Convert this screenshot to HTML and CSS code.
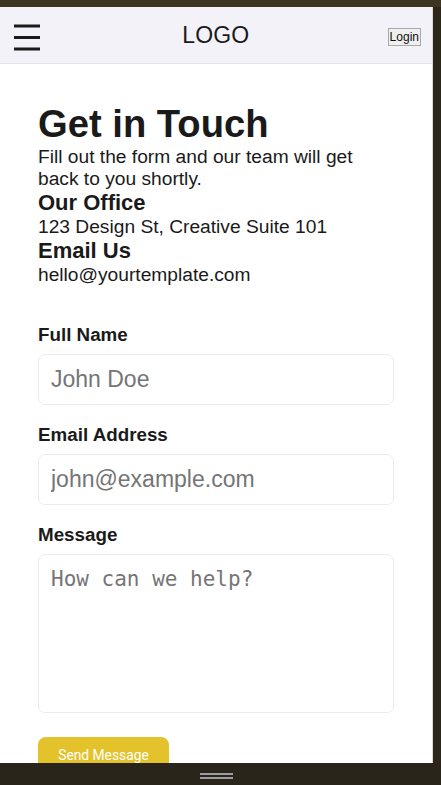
FILE: index.html
```html
<!DOCTYPE html>
<html lang="en">
<head>
<meta charset="utf-8">
<title>Contact</title>
<link rel="stylesheet" href="styles.css">
</head>
<body>
<div class="topbar"></div>
<div class="device-row">
  <div class="screen">
    <header class="site-header">
      <button class="menu-btn" aria-label="Menu">
        <svg width="30" height="30" viewBox="0 0 30 30">
          <rect x="2" y="3.5" width="26" height="3" fill="#1a1a1a"/>
          <rect x="2" y="15" width="26" height="3" fill="#1a1a1a"/>
          <rect x="2" y="26.5" width="26" height="3" fill="#1a1a1a"/>
        </svg>
      </button>
      <div class="logo">LOGO</div>
      <button class="login-btn">Login</button>
    </header>
    <main class="content">
      <section class="info">
        <h1 class="title">Get in Touch</h1>
        <p class="lead">Fill out the form and our team will get back to you shortly.</p>
        <h2 class="info-head">Our Office</h2>
        <p class="info-text">123 Design St, Creative Suite 101</p>
        <h2 class="info-head">Email Us</h2>
        <p class="info-text">hello@yourtemplate.com</p>
      </section>
      <form class="contact-form">
        <div class="field">
          <label class="field-label" for="name">Full Name</label>
          <input class="field-input" id="name" type="text" placeholder="John Doe">
        </div>
        <div class="field">
          <label class="field-label" for="email">Email Address</label>
          <input class="field-input" id="email" type="email" placeholder="john@example.com">
        </div>
        <div class="field">
          <label class="field-label" for="msg">Message</label>
          <textarea class="field-area" id="msg" placeholder="How can we help?"></textarea>
        </div>
        <button type="button" class="send-btn">Send Message</button>
      </form>
    </main>
  </div>
  <div class="side-strip"></div>
</div>
<div class="bottombar">
  <div class="handle"><span></span><span></span></div>
</div>
</body>
</html>
```

FILE: styles.css
```css
* { box-sizing: border-box; }

html, body {
  margin: 0;
  padding: 0;
}

body {
  width: 441px;
  height: 785px;
  overflow: hidden;
  background: #2b2619;
  font-family: "Liberation Sans", Arial, sans-serif;
  color: #1a1a1a;
}

.topbar {
  height: 7px;
  background: #3d3522;
}

.device-row {
  display: flex;
  height: 756px;
}

.screen {
  width: 433px;
  height: 756px;
  overflow: hidden;
  background: #ffffff;
  border-right: 1px solid #d8d8d8;
}

.side-strip {
  flex: 1;
  background: #2b2619;
}

.bottombar {
  height: 22px;
  background: #2a251a;
  display: flex;
  justify-content: center;
  align-items: center;
}

.handle {
  display: flex;
  flex-direction: column;
  gap: 2px;
  margin-left: -9px;
  margin-top: 4px;
}

.handle span {
  display: block;
  width: 33px;
  height: 2px;
  background: #9c9c9c;
}

/* header */
.site-header {
  height: 57px;
  background: #f3f2f8;
  border-bottom: 1px solid #e4e3ea;
  display: flex;
  align-items: center;
  justify-content: space-between;
  padding: 0 11px 0 12px;
}

.menu-btn {
  background: none;
  border: 0;
  padding: 0;
  width: 30px;
  height: 30px;
  display: flex;
  margin-top: 1px;
}

.logo {
  font-size: 23px;
  letter-spacing: 0.2px;
  margin-top: 0;
  margin-left: 2px;
  color: #1a1a1a;
}

.login-btn {
  font-family: "Liberation Sans", Arial, sans-serif;
  font-size: 12px;
  line-height: 14px;
  padding: 1px 1px;
  border: 1px solid #a9a9a9;
  background: #efefef;
  color: #111;
  margin-top: 3px;
}

/* content */
.content {
  padding: 38px 38px;
}

.title {
  margin: 0;
  font-size: 38.2px;
  font-weight: 700;
  line-height: normal;
}

.lead {
  margin: 0;
  font-size: 19.2px;
  line-height: normal;
}

.info-head {
  margin: 0;
  font-size: 22px;
  font-weight: 700;
  line-height: normal;
}

.info-text {
  margin: 0;
  font-size: 19.2px;
  line-height: normal;
}

.contact-form {
  margin-top: 38px;
  display: flex;
  flex-direction: column;
}

.field {
  display: flex;
  flex-direction: column;
  margin-bottom: 19px;
}

.field-label {
  font-size: 18.8px;
  font-weight: 700;
  line-height: normal;
  margin-bottom: 8px;
}

.field-input {
  height: 51px;
  width: 100%;
  border: 1px solid #ececec;
  border-radius: 7px;
  padding: 0 12px;
  font-family: "Liberation Sans", Arial, sans-serif;
  font-size: 23px;
  color: #1a1a1a;
  background: #fff;
  outline: none;
}

.field-input::placeholder {
  color: #757575;
}

.field-area {
  height: 159px;
  width: 100%;
  border: 1px solid #ececec;
  border-radius: 7px;
  padding: 12px 12px;
  font-family: "DejaVu Sans Mono", monospace;
  font-size: 21px;
  line-height: normal;
  color: #1a1a1a;
  background: #fff;
  resize: none;
  outline: none;
}

.field-area::placeholder {
  color: #757575;
}

.send-btn {
  align-self: flex-start;
  margin-top: 5px;
  width: 131px;
  height: 36px;
  border: 0;
  border-radius: 8px;
  background: #e3c22c;
  color: #ffffff;
  font-family: Roboto, "Liberation Sans", sans-serif;
  font-size: 13.8px;
  font-weight: 400;
  line-height: 16px;
  padding: 0 12px;
}
```
